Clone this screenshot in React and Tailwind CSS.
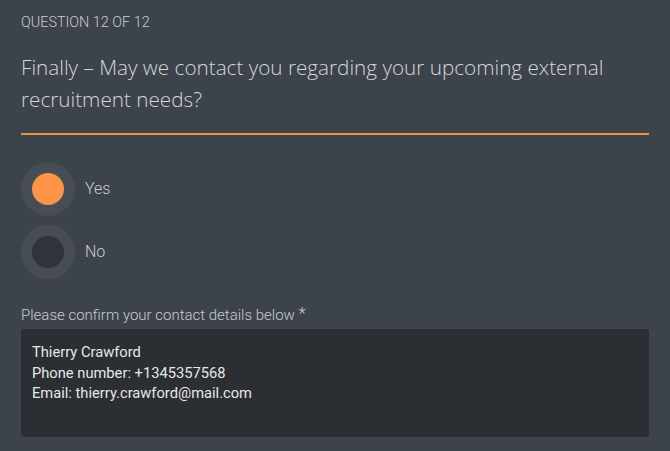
export default function App() {
  return (
    <div className="min-h-screen w-full bg-[#3d434b] px-[21px] pt-[14px] font-['Roboto',sans-serif]">
      <div className="text-[14.4px] leading-[18px] font-light text-[#c9cbce]">QUESTION 12 OF 12</div>

      <h1 className="mt-[19px] pb-[18px] border-b-2 border-[#f08f3a] text-[20.7px] leading-[32px] font-light text-[#d4d6d8] font-['Open_Sans',sans-serif]">
        Finally – May we contact you regarding your upcoming external recruitment needs?
      </h1>

      {/* Radio options */}
      <div className="mt-[27px] flex flex-col gap-[9px]">
        <label className="flex items-center gap-[10px] cursor-pointer">
          <span className="w-[54px] h-[54px] rounded-full bg-[#474c55] flex items-center justify-center">
            <span className="w-[32px] h-[32px] rounded-full bg-[#ff9447]" />
          </span>
          <span className="text-[16px] font-light text-[#c9cbce]">Yes</span>
        </label>
        <label className="flex items-center gap-[10px] cursor-pointer">
          <span className="w-[54px] h-[54px] rounded-full bg-[#474c55] flex items-center justify-center">
            <span className="w-[32px] h-[32px] rounded-full bg-[#30343b]" />
          </span>
          <span className="text-[16px] font-light text-[#c9cbce]">No</span>
        </label>
      </div>

      {/* Contact details */}
      <div className="mt-[27px] text-[15px] leading-[18px] font-light text-[#c9cbce]">
        Please confirm your contact details below <span className="text-[17px] align-top leading-[14px]">*</span>
      </div>
      <div className="mt-[5px] h-[108px] rounded-[3px] bg-[#2b2e33] px-[11px] pt-[13px] text-[14.7px] leading-[20.5px] text-[#e6e7e8]">
        <div>Thierry Crawford</div>
        <div>Phone number: +1345357568</div>
        <div>Email: thierry.crawford@mail.com</div>
      </div>
    </div>
  );
}
